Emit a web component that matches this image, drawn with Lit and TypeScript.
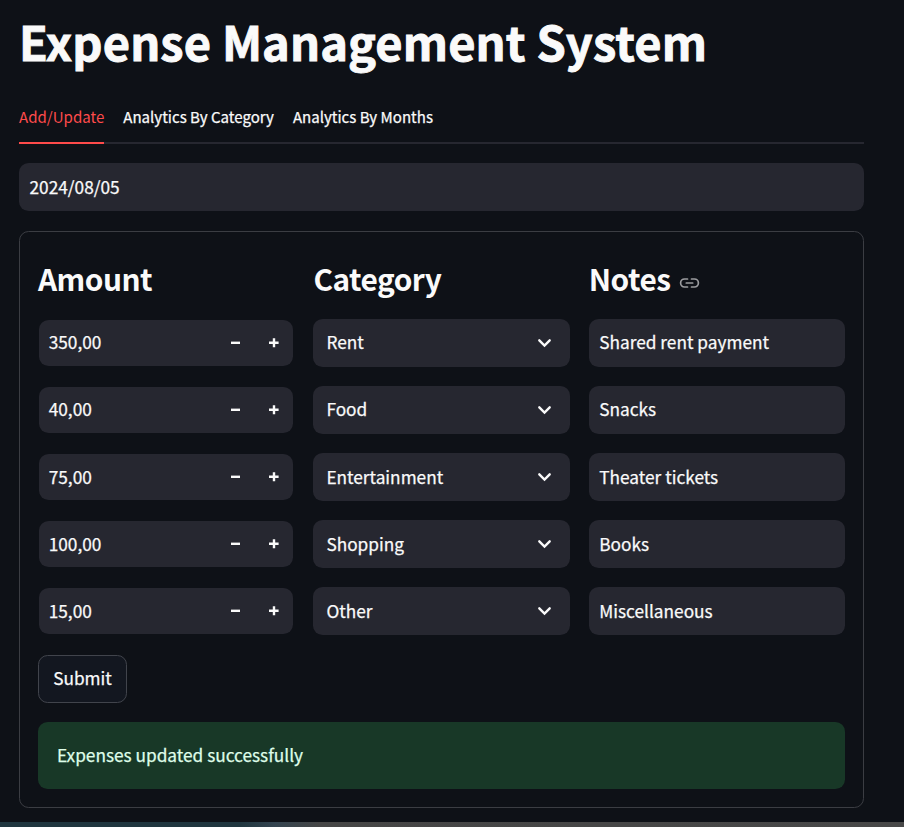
import { LitElement, html, css } from "lit";
import { customElement, state } from "lit/decorators.js";

interface Expense {
  amount: string;
  category: string;
  notes: string;
}

@customElement("app-root")
export class AppRoot extends LitElement {
  static styles = css`
    :host {
      display: flex;
      flex-direction: column;
      box-sizing: border-box;
      height: 827px;
      overflow: hidden;
      background: #0e1117;
      color: #fafafa;
      font-family: "Noto Sans CJK SC", "Noto Sans", sans-serif;
      font-size: 17.25px;
      -webkit-text-stroke: 0.25px currentColor;
    }
    * { box-sizing: border-box; }
    .page { flex: 1; padding: 0 40px 0 19px; }
    h1, h3 { margin: 0; white-space: nowrap; }
    h1 { height: 88px; font-size: 47px; font-weight: 700; line-height: 82px; letter-spacing: 0.1px; -webkit-text-stroke: 0.9px currentColor; }
    .tabs { display: flex; gap: 19px; height: 56px; border-bottom: 2px solid #262730; }
    .tab { height: 56px; padding-bottom: 2px; font-size: 15.05px; line-height: 57px; white-space: nowrap; border-bottom: 2px solid transparent; }
    .tab.active { color: #ff4b4b; border-color: #ff4b4b; -webkit-text-stroke: 0; }
    .field { display: flex; align-items: center; height: 48px; border-radius: 9.6px; background: #262730; white-space: nowrap; line-height: 24px; }
    .label { padding-bottom: 2px; }
    .label.low { padding-bottom: 0; }
    .date { margin-top: 19px; padding-left: 10.5px; }
    .form { height: 577px; margin-top: 20px; padding: 18px; border: 1px solid #3b3d43; border-radius: 9.6px; }
    .grid { display: grid; grid-template-columns: repeat(3, 1fr); column-gap: 19.2px; row-gap: 19px; }
    h3 { display: flex; align-items: center; gap: 9px; height: 50px; padding-top: 7px; font-size: 29.8px; font-weight: 700; line-height: 43px; letter-spacing: -0.5px; -webkit-text-stroke: 0; }
    .link { margin-top: 8px; }
    .number { height: 46px; margin: 1px; padding-left: 9.7px; }
    .number .label { flex: 1; }
    .step { display: flex; justify-content: center; width: 38.4px; }
    .select { justify-content: space-between; padding: 0 16px 0 13px; }
    .text { padding-left: 10.5px; }
    svg { display: block; }
    .submit { display: flex; align-items: center; justify-content: center; width: 89px; height: 48px; margin-top: 20px; padding: 0; border: 1px solid #41444c; border-radius: 9.6px; background: #131720; color: inherit; font: inherit; line-height: 24px; }
    .alert { height: 67px; margin-top: 19px; padding-left: 19px; border-radius: 9.6px; background: #183827; color: #dffde9; line-height: 65px; }
    .strip { height: 5px; background: linear-gradient(90deg, #20363f 0, #20363f 240px, #344450 275px, #464646 320px, #484848 100%); }
  `;

  @state() private tabs = ["Add/Update", "Analytics By Category", "Analytics By Months"];
  @state() private expenses: Expense[] = [
    { amount: "350,00", category: "Rent", notes: "Shared rent payment" },
    { amount: "40,00", category: "Food", notes: "Snacks" },
    { amount: "75,00", category: "Entertainment", notes: "Theater tickets" },
    { amount: "100,00", category: "Shopping", notes: "Books" },
    { amount: "15,00", category: "Other", notes: "Miscellaneous" },
  ];

  private row(e: Expense, index: number) {
    const label = index > 1 ? "label low" : "label";
    return html`
      <div class="field number">
        <span class=${label}>${e.amount}</span>
        <span class="step"><svg width="10" height="10" viewBox="0 0 10 10"><path d="M0 4.8h9" stroke="#fafafa" stroke-width="2.4"/></svg></span>
        <span class="step"><svg width="10" height="10" viewBox="0 0 10 10"><path d="M0 4.8h9.6M5 .2v9" stroke="#fafafa" stroke-width="2.4"/></svg></span>
      </div>
      <div class="field select">
        <span class=${label}>${e.category}</span>
        <svg width="19" height="19" viewBox="0 0 19 19" fill="none"><path d="M4.3 6.3l5.2 5.2 5.2-5.2" stroke="#fafafa" stroke-width="2.4" stroke-linecap="round"/></svg>
      </div>
      <div class="field text"><span class=${label}>${e.notes}</span></div>
    `;
  }

  render() {
    return html`
      <main class="page">
        <h1>Expense Management System</h1>
        <nav class="tabs">
          ${this.tabs.map((t, i) => html`<span class="tab ${i === 0 ? "active" : ""}">${t}</span>`)}
        </nav>
        <div class="field date"><span class="label low">2024/08/05</span></div>
        <section class="form">
          <div class="grid">
            <h3>Amount</h3>
            <h3>Category</h3>
            <h3>
              Notes
              <svg class="link" width="21" height="20" viewBox="0 0 21 20" fill="none" stroke="#9b9c9f" stroke-width="1.7" stroke-linecap="round"><path d="M8.5 6H5.6a4 4 0 0 0 0 8h2.9M12.5 6h2.9a4 4 0 0 1 0 8h-2.9M7.3 10h6.4"/></svg>
            </h3>
            ${this.expenses.map((e, i) => this.row(e, i))}
          </div>
          <button class="submit"><span class="label">Submit</span></button>
          <div class="alert">Expenses updated successfully</div>
        </section>
      </main>
      <div class="strip"></div>
    `;
  }
}
